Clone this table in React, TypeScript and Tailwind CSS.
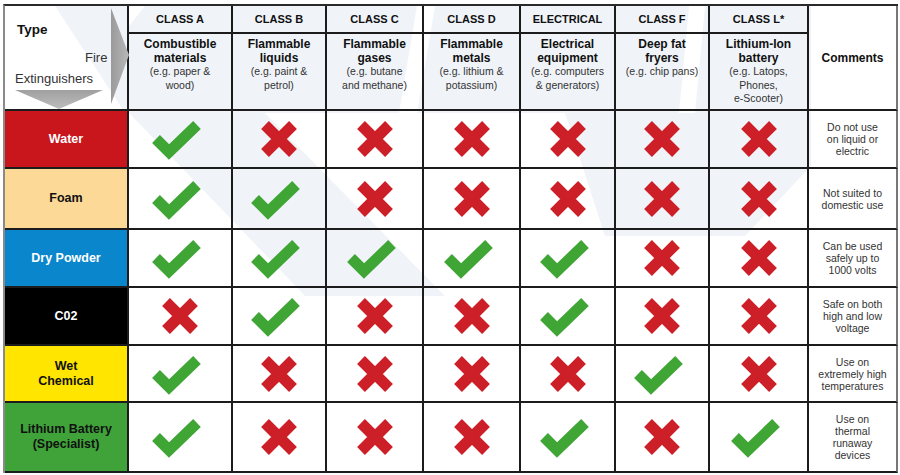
import React from 'react';

type Mark = 'y' | 'n';

const classes = [
  { label: 'CLASS A', title: ['Combustible', 'materials'], sub: ['(e.g. paper &', 'wood)'] },
  { label: 'CLASS B', title: ['Flammable', 'liquids'], sub: ['(e.g. paint &', 'petrol)'] },
  { label: 'CLASS C', title: ['Flammable', 'gases'], sub: ['(e.g. butane', 'and methane)'] },
  { label: 'CLASS D', title: ['Flammable', 'metals'], sub: ['(e.g. lithium &', 'potassium)'] },
  { label: 'ELECTRICAL', title: ['Electrical', 'equipment'], sub: ['(e.g. computers', '& generators)'] },
  { label: 'CLASS F', title: ['Deep fat', 'fryers'], sub: ['(e.g. chip pans)'] },
  { label: 'CLASS L*', title: ['Lithium-Ion', 'battery'], sub: ['(e.g. Latops,', 'Phones,', 'e-Scooter)'] },
];

const rows: { name: string[]; cell: string; marks: Mark[]; note: string[] }[] = [
  { name: ['Water'], cell: 'bg-[#c9161d] text-white', marks: ['y', 'n', 'n', 'n', 'n', 'n', 'n'], note: ['Do not use', 'on liquid or', 'electric'] },
  { name: ['Foam'], cell: 'bg-[#fdd998] text-[#111]', marks: ['y', 'y', 'n', 'n', 'n', 'n', 'n'], note: ['Not suited to', 'domestic use'] },
  { name: ['Dry Powder'], cell: 'bg-[#0a86cc] text-white', marks: ['y', 'y', 'y', 'y', 'y', 'n', 'n'], note: ['Can be used', 'safely up to', '1000 volts'] },
  { name: ['C02'], cell: 'bg-black text-white', marks: ['n', 'y', 'n', 'n', 'y', 'n', 'n'], note: ['Safe on both', 'high and low', 'voltage'] },
  { name: ['Wet', 'Chemical'], cell: 'bg-[#ffe500] text-[#111]', marks: ['y', 'n', 'n', 'n', 'n', 'y', 'n'], note: ['Use on', 'extremely high', 'temperatures'] },
  { name: ['Lithium Battery', '(Specialist)'], cell: 'bg-[#3fa33a] text-[#111]', marks: ['y', 'n', 'n', 'n', 'y', 'n', 'y'], note: ['Use on', 'thermal', 'runaway', 'devices'] },
];

const Check = () => (
  <svg width="50" height="42" viewBox="0 0 50 42" className="-translate-x-[3px]">
    <polyline points="4,21 17,34 45,7" fill="none" stroke="#3fa535" strokeWidth="11" strokeLinejoin="miter" />
  </svg>
);

const Cross = () => (
  <svg width="40" height="40" viewBox="0 0 40 40">
    <path d="M6 6 L34 34 M34 6 L6 34" fill="none" stroke="#cd1f28" strokeWidth="11" />
  </svg>
);

const cellBorder = 'border-r-2 border-b-2 border-[#1c1c1c]';

export default function App() {
  return (
    <div className="w-[900px] h-[475px] bg-white pt-[4px] pl-[3px] font-['Liberation_Sans',Arial,sans-serif] text-[#222] overflow-hidden">
      <div className="relative isolate w-[895px] border-t-2 border-l-2 border-t-[#2a2a2a] border-l-[#8a8a8a] grid grid-cols-[124px_104px_94px_97px_97px_95px_94px_99px_89px] grid-rows-[28px_77px_58px_61px_58px_58px_57px_70px]">
        {/* watermark */}
        <svg className="absolute inset-0 -z-10" width="895" height="469" viewBox="0 0 895 469">
          <polygon points="50,0 806,0 806,107 120,107" fill="#f0f4f9" />
          <polygon points="412,0 430,0 412,107 394,107" fill="#ffffff" />
          <polygon points="684,0 700,0 690,107 674,107" fill="#ffffff" />
          <polygon points="124,0 140,0 124,20" fill="#ffffff" />
          <polygon points="124,107 260,107 440,290 300,290" fill="#f0f4f9" />
          <polygon points="560,107 806,107 806,160 740,230 600,230" fill="#f0f4f9" />
        </svg>

        {/* Type cell */}
        <div className={`row-span-2 relative ${cellBorder}`}>
          <div className="absolute left-[12px] top-[17px] text-[13.5px] leading-none font-bold text-[#111]">Type</div>
          <div className="absolute left-[80px] top-[45px] text-[13px] leading-none text-[#333]">Fire</div>
          <div className="absolute left-[10px] top-[66px] text-[13px] leading-none text-[#333]">Extinguishers</div>
          <svg className="absolute left-[106px] top-[2px]" width="18" height="96" viewBox="0 0 18 96">
            <defs>
              <linearGradient id="ga" x1="0" y1="0" x2="1" y2="0">
                <stop offset="0" stopColor="#9a9a9a" />
                <stop offset="1" stopColor="#b8b8b8" />
              </linearGradient>
            </defs>
            <polygon points="0,0 18,47 0,96" fill="url(#ga)" />
          </svg>
          <svg className="absolute left-[10px] top-[84px]" width="88" height="19" viewBox="0 0 88 19">
            <defs>
              <linearGradient id="gb" x1="0" y1="0" x2="0" y2="1">
                <stop offset="0" stopColor="#a0a0a0" />
                <stop offset="1" stopColor="#bdbdbd" />
              </linearGradient>
            </defs>
            <polygon points="0,0 88,0 44,19" fill="url(#gb)" />
          </svg>
        </div>

        {classes.map((c) => (
          <div key={c.label} className={`${cellBorder} flex items-center justify-center text-[11px] font-bold text-[#111]`}>
            {c.label}
          </div>
        ))}

        <div className="row-span-2 flex items-center justify-center text-[12px] font-bold text-[#111] border-b-2 border-[#1c1c1c] border-r-2 border-r-[#777]">
          Comments
        </div>

        {classes.map((c) => (
          <div key={c.label + '-d'} className={`${cellBorder} flex flex-col items-center justify-start pt-[4px] text-center`}>
            <div className="text-[12px] leading-[13.5px] font-bold text-[#111]">
              {c.title.map((t) => (
                <div key={t}>{t}</div>
              ))}
            </div>
            <div className="text-[10.5px] leading-[13.5px] text-[#333]">
              {c.sub.map((t) => (
                <div key={t}>{t}</div>
              ))}
            </div>
          </div>
        ))}

        {rows.map((r) => (
          <React.Fragment key={r.name.join(' ')}>
            <div className={`${cellBorder} ${r.cell} flex flex-col items-center justify-center text-[12.5px] leading-[15px] font-bold text-center`}>
              {r.name.map((n) => (
                <div key={n}>{n}</div>
              ))}
            </div>
            {r.marks.map((m, i) => (
              <div key={i} className={`${cellBorder} flex items-center justify-center`}>
                {m === 'y' ? <Check /> : <Cross />}
              </div>
            ))}
            <div className="border-b-2 border-[#1c1c1c] border-r-2 border-r-[#777] flex flex-col items-center justify-center text-center text-[10.5px] leading-[12px] text-[#333]">
              {r.note.map((n) => (
                <div key={n}>{n}</div>
              ))}
            </div>
          </React.Fragment>
        ))}
      </div>
    </div>
  );
}
